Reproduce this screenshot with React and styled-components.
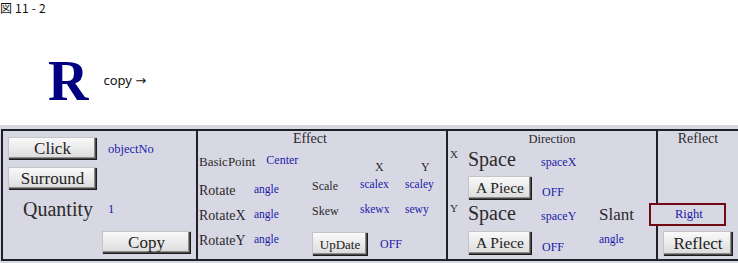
import React from 'react';
import styled, { createGlobalStyle } from 'styled-components';

const GlobalStyle = createGlobalStyle`
  html, body {
    margin: 0;
    padding: 0;
    background: #fff;
  }
  body {
    font-family: "Liberation Serif", "Times New Roman", serif;
  }
`;

const LINE = '#1e2226';
const BLUE = '#1a1aa8';
const INK = '#2a2a2a';
const SERIF = '"Liberation Serif", "Times New Roman", serif';

const Page = styled.div`
  width: 738px;
  height: 263px;
  overflow: hidden;
`;

const Top = styled.div`
  height: 125px;
`;

const Caption = styled.div`
  height: 14px;
  padding-top: 1px;
  box-sizing: border-box;
  font: 12px/13px "Noto Sans CJK JP", "Noto Sans", sans-serif;
  letter-spacing: 0.2px;
  color: #111;
`;

const Hero = styled.div`
  display: flex;
  align-items: center;
  height: 56px;
  margin-top: 39px;
  padding-left: 48px;
`;

const Letter = styled.span`
  font: bold 56px/56px "Liberation Serif", serif;
  color: #000080;
`;

const Note = styled.span`
  margin: 0 0 2px 15px;
  font: 13px/16px "Noto Sans", "DejaVu Sans", sans-serif;
  color: #111;
`;

const Panel = styled.div`
  height: 138px;
  box-sizing: border-box;
  padding: 4px 0 0 1px;
  background: #d8d8e4;
`;

const Table = styled.div`
  display: grid;
  grid-template-columns: 193px 250px 210px 1fr;
  width: 739px;
  height: 132px;
  box-sizing: border-box;
  border: 2px solid ${LINE};
`;

const Cell = styled.div`
  display: flex;
  flex-direction: column;
  box-sizing: border-box;
  border-left: ${p => (p.$first ? 'none' : `2px solid ${LINE}`)};
  padding: ${p => p.$pad || '0'};
`;

const Heading = styled.div`
  height: 16px;
  font-family: ${SERIF};
  font-size: ${p => p.$fs}px;
  line-height: 16px;
  color: ${INK};
  text-align: ${p => (p.$center ? 'center' : 'left')};
  padding-left: ${p => p.$pl || 0}px;
`;

const Row = styled.div`
  display: flex;
  align-items: ${p => p.$align || 'center'};
  height: ${p => p.$h}px;
  margin-top: ${p => p.$mt || 0}px;
  flex-shrink: 0;
`;

const Slot = styled.div`
  width: ${p => p.$w}px;
  flex-shrink: 0;
  padding-left: ${p => p.$pl || 0}px;
  box-sizing: border-box;
  display: flex;
  align-items: inherit;
`;

const Label = styled.span`
  font-family: ${SERIF};
  font-size: ${p => p.$fs}px;
  line-height: ${p => p.$lh || 16}px;
  color: ${INK};
  white-space: nowrap;
`;

const Value = styled.span`
  font-family: ${SERIF};
  font-size: ${p => p.$fs || 12}px;
  line-height: ${p => p.$lh || 16}px;
  color: ${BLUE};
  white-space: nowrap;
  margin-left: ${p => p.$ml || 0}px;
  align-self: ${p => p.$self || 'auto'};
`;

const Mark = styled.span`
  font-family: ${SERIF};
  font-size: 11px;
  line-height: 12px;
  color: ${INK};
  align-self: flex-start;
  width: 20px;
  padding-left: 2px;
  box-sizing: border-box;
  flex-shrink: 0;
`;

const Button = styled.button`
  width: ${p => p.$w}px;
  height: ${p => p.$h || 24}px;
  margin-left: ${p => p.$ml || 0}px;
  padding: 0;
  border: none;
  flex-shrink: 0;
  font-family: ${SERIF};
  font-size: ${p => p.$fs || 17}px;
  line-height: 1;
  color: #222;
  background: linear-gradient(#fbfbfb, #d9d9d9);
  box-shadow:
    inset 1px 1px 0 #c4c4c4,
    inset -1px -1px 0 #1c1c1c,
    inset -2px -2px 0 #4a4a4a,
    inset -3px -3px 0 #8c8c8c;
`;

const Body = styled.div`
  display: flex;
`;

const Sub = styled.div`
  display: flex;
  flex-direction: column;
  width: ${p => (p.$w ? `${p.$w}px` : 'auto')};
  padding: ${p => p.$pad || 0};
  box-sizing: border-box;
`;

const Select = styled.div`
  width: 77px;
  height: 23px;
  margin: 56px 0 0 -9px;
  box-sizing: border-box;
  border: 2px solid #6e0b14;
  padding-left: 24px;
  font-family: ${SERIF};
  font-size: 12.5px;
  line-height: 19px;
  color: ${BLUE};
  background: #d8d8e4;
  position: relative;
`;

export default function App() {
  return (
    <Page>
      <GlobalStyle />
      <Top>
        <Caption>図 11 - 2</Caption>
        <Hero>
          <Letter>R</Letter>
          <Note>copy →</Note>
        </Hero>
      </Top>
      <Panel>
        <Table>
          <Cell $first $pad="6px 0 0 5px">
            <Row $h={23}>
              <Button $w={89} $h={23}>Click</Button>
              <Value $fs={12.5} $ml={11}>objectNo</Value>
            </Row>
            <Row $h={23} $mt={7}>
              <Button $w={89} $h={23}>Surround</Button>
            </Row>
            <Row $h={27} $mt={5}>
              <Slot $w={100} $pl={15}>
                <Label $fs={20} $lh={24}>Quantity</Label>
              </Slot>
              <Value $fs={12.5}>1</Value>
            </Row>
            <Row $h={23} $mt={9}>
              <Button $w={89} $h={23} $ml={94}>Copy</Button>
            </Row>
          </Cell>

          <Cell>
            <Heading $fs={14} $pl={95}>Effect</Heading>
            <Body>
              <Sub $w={114} $pad="7px 0 0 1px">
                <Row $h={29} $align="flex-start">
                  <Label $fs={13}>BasicPoint</Label>
                  <Value $fs={12} $lh={12} $ml={11}>Center</Value>
                </Row>
                <Row $h={25} $align="flex-start">
                  <Slot $w={55}><Label $fs={14}>Rotate</Label></Slot>
                  <Value $fs={11.5} $lh={13}>angle</Value>
                </Row>
                <Row $h={25} $align="flex-start">
                  <Slot $w={55}><Label $fs={14}>RotateX</Label></Slot>
                  <Value $fs={11.5} $lh={13}>angle</Value>
                </Row>
                <Row $h={16} $align="flex-start">
                  <Slot $w={55}><Label $fs={14}>RotateY</Label></Slot>
                  <Value $fs={11.5} $lh={13}>angle</Value>
                </Row>
              </Sub>
              <Sub $pad="12px 0 0 0">
                <Row $h={19} $align="flex-start">
                  <Slot $w={48} />
                  <Slot $w={45} $pl={15}><Label $fs={12}>X</Label></Slot>
                  <Slot $w={30} $pl={16}><Label $fs={12}>Y</Label></Slot>
                </Row>
                <Row $h={25} $align="flex-start">
                  <Slot $w={48}><Label $fs={12}>Scale</Label></Slot>
                  <Slot $w={45}><Value $fs={11.5} $lh={13}>scalex</Value></Slot>
                  <Value $fs={11.5} $lh={13}>scaley</Value>
                </Row>
                <Row $h={29} $align="flex-start">
                  <Slot $w={48}><Label $fs={12}>Skew</Label></Slot>
                  <Slot $w={45}><Value $fs={11.5} $lh={13}>skewx</Value></Slot>
                  <Value $fs={11.5} $lh={13}>sewy</Value>
                </Row>
                <Row $h={24}>
                  <Button $w={56} $fs={13}>UpDate</Button>
                  <Value $fs={12} $ml={12}>OFF</Value>
                </Row>
              </Sub>
            </Body>
          </Cell>

          <Cell>
            <Heading $fs={12.5} $center>Direction</Heading>
            <Row $h={22} $mt={1} $align="baseline">
              <Mark>X</Mark>
              <Slot $w={73}><Label $fs={20} $lh={22}>Space</Label></Slot>
              <Value $fs={12}>spaceX</Value>
            </Row>
            <Row $h={24} $mt={6} $align="flex-end">
              <Slot $w={20} />
              <Button $w={64} $fs={15.5}>A Piece</Button>
              <Value $fs={12} $ml={10}>OFF</Value>
            </Row>
            <Row $h={22} $mt={2} $align="baseline">
              <Mark>Y</Mark>
              <Slot $w={73}><Label $fs={20} $lh={22}>Space</Label></Slot>
              <Slot $w={58}><Value $fs={12}>spaceY</Value></Slot>
              <Label $fs={17} $lh={22}>Slant</Label>
            </Row>
            <Row $h={24} $mt={7} $align="flex-end">
              <Slot $w={20} />
              <Button $w={64} $fs={15.5}>A Piece</Button>
              <Slot $w={67} $pl={10}><Value $fs={12}>OFF</Value></Slot>
              <Value $fs={11.5} $self="flex-start">angle</Value>
            </Row>
          </Cell>

          <Cell>
            <Heading $fs={14} $center>Reflect</Heading>
            <Select>Right</Select>
            <Row $h={25} $mt={5}>
              <Button $w={70} $h={25} $ml={5}>Reflect</Button>
            </Row>
          </Cell>
        </Table>
      </Panel>
    </Page>
  );
}
